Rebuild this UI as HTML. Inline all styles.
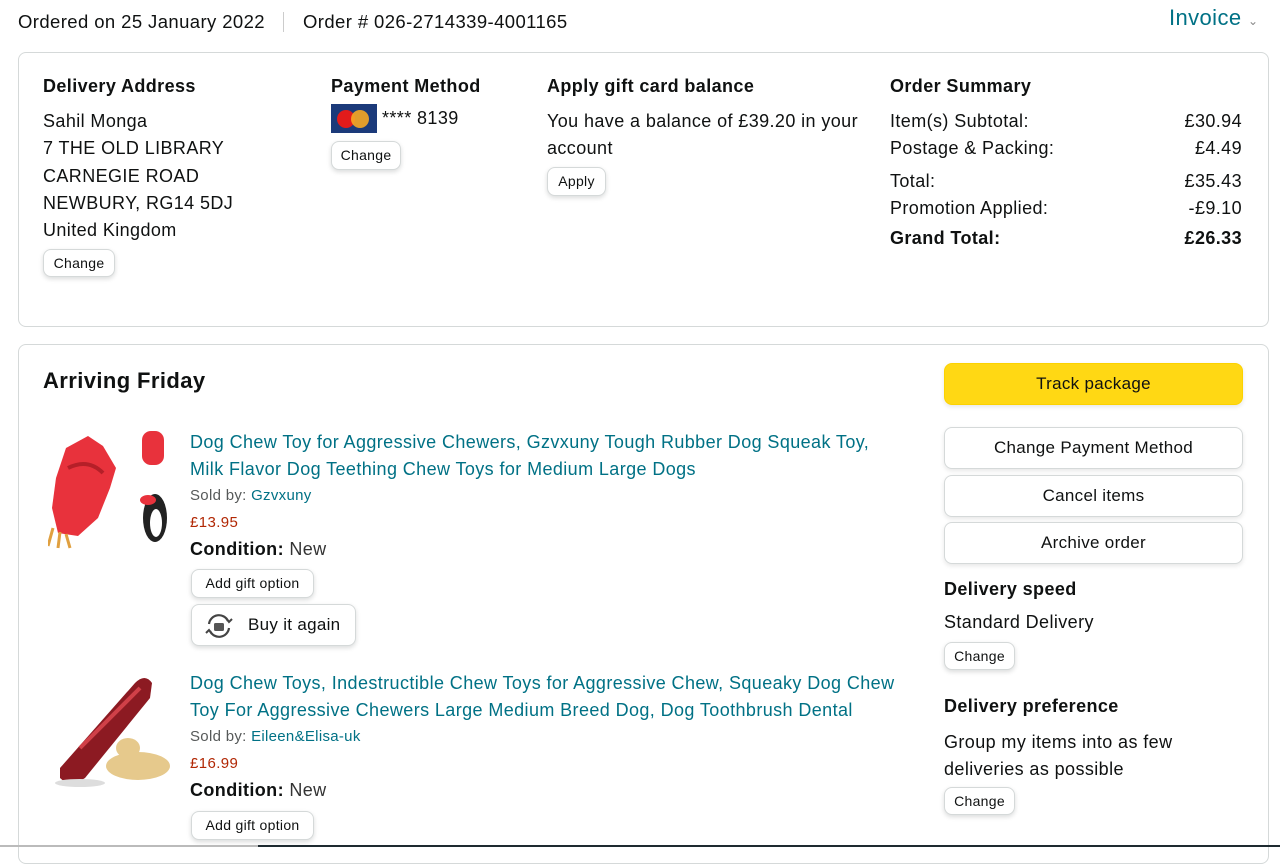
<!DOCTYPE html>
<html><head><meta charset="utf-8"><style>
*{box-sizing:border-box;margin:0;padding:0}
body{width:1280px;height:847px;overflow:hidden;background:#fff;font-family:"Liberation Sans",sans-serif;color:#0f1111;position:relative}
.a{position:absolute;white-space:nowrap}
.t{font-size:18px;letter-spacing:.4px}
.b{font-weight:bold}
.btn{position:absolute;border:1px solid #d5d9d9;border-radius:8px;background:#fff;box-shadow:0 2px 5px rgba(15,17,17,.15);font-size:14px;letter-spacing:.3px;text-align:center;color:#0f1111}
.big{position:absolute;border:1px solid #d5d9d9;border-radius:8px;background:#fff;box-shadow:0 2px 5px rgba(15,17,17,.1);font-size:17px;letter-spacing:.3px;text-align:center;line-height:40px;width:299px;height:42px;left:944px}
.card{position:absolute;border:1px solid #d5d9d9;border-radius:8px}
.lk{color:#007185}
.pr{color:#b12704;font-size:15px;letter-spacing:.4px}
.sm{font-size:15px;letter-spacing:.3px;color:#565959}
</style></head><body>
<div class="a t" style="left:18px;top:11px;font-size:18.5px">Ordered on 25 January 2022</div>
<div class="a" style="left:283px;top:12px;width:1px;height:20px;background:#ccc"></div>
<div class="a t" style="left:303px;top:11px;font-size:18.5px">Order # 026-2714339-4001165</div>
<div class="a lk" style="left:1169px;top:5px;font-size:22px;letter-spacing:.4px">Invoice <span style="font-size:12px;color:#888">&#8964;</span></div>

<div class="card" style="left:18px;top:52px;width:1251px;height:275px"></div>
<div class="a t b" style="left:43px;top:76px">Delivery Address</div>
<div class="a t" style="left:43px;top:108px;line-height:27.3px">Sahil Monga<br>7 THE OLD LIBRARY<br>CARNEGIE ROAD<br>NEWBURY, RG14 5DJ<br>United Kingdom</div>
<div class="btn" style="left:43px;top:249px;width:72px;height:28px;line-height:26px">Change</div>

<div class="a t b" style="left:331px;top:76px">Payment Method</div>
<div class="a" style="left:331px;top:104px;width:46px;height:29px;background:#1b3a7a">
<div class="a" style="left:6px;top:6px;width:18px;height:18px;border-radius:50%;background:#e21b1b"></div>
<div class="a" style="left:20px;top:6px;width:18px;height:18px;border-radius:50%;background:#f7a823;opacity:.9"></div></div>
<div class="a t" style="left:382px;top:108px">**** 8139</div>
<div class="btn" style="left:331px;top:141px;width:70px;height:29px;line-height:27px">Change</div>

<div class="a t b" style="left:547px;top:76px">Apply gift card balance</div>
<div class="a t" style="left:547px;top:108px;line-height:27.3px">You have a balance of £39.20 in your<br>account</div>
<div class="btn" style="left:547px;top:167px;width:59px;height:29px;line-height:27px">Apply</div>

<div class="a t b" style="left:890px;top:76px">Order Summary</div>
<div class="a t" style="left:890px;top:108px;line-height:27.3px">Item(s) Subtotal:<br>Postage &amp; Packing:</div>
<div class="a t" style="right:38px;top:108px;line-height:27.3px;text-align:right">£30.94<br>£4.49</div>
<div class="a t" style="left:890px;top:168px;line-height:27.3px">Total:<br>Promotion Applied:</div>
<div class="a t" style="right:38px;top:168px;line-height:27.3px;text-align:right">£35.43<br>-£9.10</div>
<div class="a t b" style="left:890px;top:228px">Grand Total:</div>
<div class="a t b" style="right:38px;top:228px">£26.33</div>

<div class="card" style="left:18px;top:344px;width:1251px;height:520px"></div>
<div class="a b" style="left:43px;top:368px;font-size:22px;letter-spacing:.4px">Arriving Friday</div>

<svg class="a" style="left:48px;top:428px" width="125" height="122" viewBox="0 0 125 122">
<path d="M18 20 L40 8 L55 18 L68 40 L62 60 L50 90 L30 108 L10 105 L4 80 L8 50 Z" fill="#e8323c"/>
<path d="M20 40 Q40 30 55 45" stroke="#b51f28" stroke-width="4" fill="none"/>
<path d="M5 100 L0 118 M12 104 L10 120 M18 106 L22 120" stroke="#e0a040" stroke-width="3"/>
<rect x="94" y="3" width="22" height="34" rx="9" fill="#e8323c"/>
<ellipse cx="107" cy="90" rx="12" ry="24" fill="#222"/><ellipse cx="108" cy="95" rx="6" ry="14" fill="#fff"/>
<ellipse cx="100" cy="72" rx="8" ry="5" fill="#e8323c"/>
</svg>
<svg class="a" style="left:50px;top:668px" width="125" height="124" viewBox="0 0 125 124">
<path d="M10 100 L85 15 Q95 5 102 15 L100 30 L35 110 Q20 120 10 110 Z" fill="#8c1a22"/>
<path d="M30 80 L90 20" stroke="#d04048" stroke-width="4"/>
<ellipse cx="30" cy="115" rx="25" ry="4" fill="#ddd"/>
<ellipse cx="88" cy="98" rx="32" ry="14" fill="#e6c98c"/><ellipse cx="78" cy="80" rx="12" ry="10" fill="#e6c98c"/>
</svg>

<div class="a lk t" style="left:190px;top:429px;line-height:27.3px">Dog Chew Toy for Aggressive Chewers, Gzvxuny Tough Rubber Dog Squeak Toy,<br>Milk Flavor Dog Teething Chew Toys for Medium Large Dogs</div>
<div class="a sm" style="left:190px;top:487px">Sold by: <span class="lk">Gzvxuny</span></div>
<div class="a pr" style="left:190px;top:514px">£13.95</div>
<div class="a t" style="left:190px;top:539px"><b>Condition:</b> <span style="color:#333">New</span></div>
<div class="btn" style="left:191px;top:569px;width:123px;height:29px;line-height:27px">Add gift option</div>
<div class="btn" style="left:191px;top:604px;width:165px;height:42px;line-height:40px;font-size:17px;text-align:left;padding-left:56px">Buy it again
<svg class="a" style="left:12px;top:7px" width="30" height="28" viewBox="0 0 30 28"><path d="M5 12 A10 10 0 0 1 24 9 M25 16 A10 10 0 0 1 6 19" stroke="#444" stroke-width="2.2" fill="none"/><path d="M22 6 L25 10 L28 7 M8 22 L5 18 L2 21" stroke="#444" stroke-width="2" fill="none"/><rect x="10" y="11" width="10" height="8" rx="1.5" fill="#555"/></svg></div>

<div class="a lk t" style="left:190px;top:670px;line-height:27.3px">Dog Chew Toys, Indestructible Chew Toys for Aggressive Chew, Squeaky Dog Chew<br>Toy For Aggressive Chewers Large Medium Breed Dog, Dog Toothbrush Dental</div>
<div class="a sm" style="left:190px;top:728px">Sold by: <span class="lk">Eileen&amp;Elisa-uk</span></div>
<div class="a pr" style="left:190px;top:755px">£16.99</div>
<div class="a t" style="left:190px;top:780px"><b>Condition:</b> <span style="color:#333">New</span></div>
<div class="btn" style="left:191px;top:811px;width:123px;height:29px;line-height:27px">Add gift option</div>

<div class="big" style="top:363px;background:#ffd814;border-color:#fcd200">Track package</div>
<div class="big" style="top:427px">Change Payment Method</div>
<div class="big" style="top:475px">Cancel items</div>
<div class="big" style="top:522px">Archive order</div>
<div class="a t b" style="left:944px;top:579px">Delivery speed</div>
<div class="a t" style="left:944px;top:612px">Standard Delivery</div>
<div class="btn" style="left:944px;top:642px;width:71px;height:28px;line-height:26px">Change</div>
<div class="a t b" style="left:944px;top:696px">Delivery preference</div>
<div class="a t" style="left:944px;top:729px;line-height:27.3px">Group my items into as few<br>deliveries as possible</div>
<div class="btn" style="left:944px;top:787px;width:71px;height:28px;line-height:26px">Change</div>

<div class="a" style="left:0;top:845px;width:258px;height:2px;background:#bbb"></div>
<div class="a" style="left:258px;top:845px;width:1022px;height:2px;background:#1e2a30"></div>
</body></html>
